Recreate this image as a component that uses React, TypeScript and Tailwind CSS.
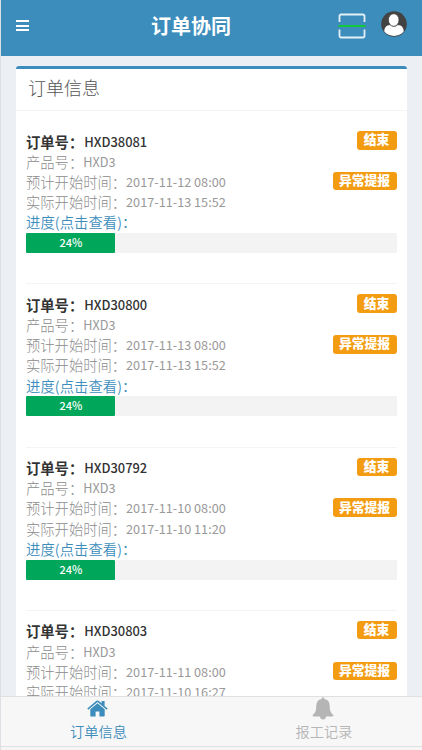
import { useState } from 'react';
import clsx from 'clsx';

interface Order {
  no: string;
  product: string;
  planned: string;
  actual: string;
  progress: number;
}

const ORDERS: Order[] = [
  { no: 'HXD38081', product: 'HXD3', planned: '2017-11-12 08:00', actual: '2017-11-13 15:52', progress: 24 },
  { no: 'HXD30800', product: 'HXD3', planned: '2017-11-13 08:00', actual: '2017-11-13 15:52', progress: 24 },
  { no: 'HXD30792', product: 'HXD3', planned: '2017-11-10 08:00', actual: '2017-11-10 11:20', progress: 24 },
  { no: 'HXD30803', product: 'HXD3', planned: '2017-11-11 08:00', actual: '2017-11-10 16:27', progress: 24 },
];

function ScanIcon() {
  return (
    <svg width="28" height="26" viewBox="0 0 28 26" fill="none">
      <path d="M1.500 9V3A1.500 1.500 0 0 1 3 1.500H25A1.500 1.500 0 0 1 26.500 3V9M1.500 16.500V23A1.500 1.500 0 0 0 3 24.500H25A1.500 1.500 0 0 0 26.500 23V16.500" stroke="#e4f1f8" strokeWidth="1.800" />
      <path d="M0.500 13H27.500" stroke="#12c83c" strokeWidth="2" />
    </svg>
  );
}

function UserIcon() {
  return (
    <svg width="26" height="26" viewBox="0 0 26 26">
      <circle cx="13" cy="13" r="12.800" fill="#434343" />
      <path d="M3.300 20.500C3.300 16.300 5.500 14.300 9 14Q13 17 17 14C20.500 14.300 22.700 16.300 22.700 20.500A12.800 12.800 0 0 1 3.300 20.500Z" fill="#fff" />
      <ellipse cx="12.700" cy="9" rx="5.300" ry="6.300" fill="#fff" stroke="#434343" strokeWidth="0.800" />
    </svg>
  );
}

function HomeIcon() {
  return (
    <svg width="21" height="17" viewBox="0 0 21 17" fill="currentColor">
      <path d="M10.500 3.300 3.300 9.300V15.800Q3.300 16.600 4.100 16.600H8.600V11.600H12.400V16.600H16.900Q17.700 16.600 17.700 15.800V9.300Z" />
      <path d="M0.300 8.500 9.400 0.800Q10.500 0 11.600 0.800L14.600 3.300V1H17.600V5.900L20.700 8.500 19.700 9.700 10.500 2.100 1.300 9.700Z" />
    </svg>
  );
}

function BellIcon() {
  return (
    <svg width="22" height="23" viewBox="0 0 22 23" fill="currentColor">
      <path d="M11 0.200Q12.400 0.200 12.400 1.900C16 2.600 17.700 5.200 17.700 8.500C17.700 14 19 16.300 21.500 18.100Q21.500 19.600 20 19.600H14C14 21.400 12.700 22.500 11 22.500S8 21.400 8 19.600H2Q0.500 19.600 0.500 18.100C3 16.300 4.300 14 4.300 8.500C4.300 5.200 6 2.600 9.600 1.900Q9.600 0.200 11 0.200Z" />
    </svg>
  );
}

function Field({ label, value }: { label: string; value: string }) {
  return (
    <div className="flex h-[20.200px] items-center whitespace-nowrap font-light text-[#8c8c8c]">
      <span>{label}：</span>
      <span className="text-[12.700px] font-normal text-[#999]">{value}</span>
    </div>
  );
}

function OrderItem({ order }: { order: Order }) {
  return (
    <li className="h-[163.300px] border-t border-[#f4f4f4] pt-[10.500px] text-[14.300px] leading-[20.200px] first:border-transparent">
      <div className="flex justify-between">
        <div>
          <div className="flex h-[20.200px] items-center whitespace-nowrap font-bold text-[#333]">
            <span>订单号：</span>
            <span className="pl-[1px] text-[12.900px] font-medium">{order.no}</span>
          </div>
          <Field label="产品号" value={order.product} />
          <Field label="预计开始时间" value={order.planned} />
          <Field label="实际开始时间" value={order.actual} />
        </div>
        <div className="-mt-[0.500px] flex flex-col items-end gap-[22.300px] text-[12.800px] font-black leading-[16px] text-white">
          <button className="h-[18.500px] w-[40px] rounded-[3px] bg-[#f39c12] pb-[2px]">结束</button>
          <button className="h-[18.500px] w-[64px] rounded-[3px] bg-[#f39c12] pb-[2px]">异常提报</button>
        </div>
      </div>
      <a href="#" className="block h-[20.700px] w-fit whitespace-nowrap font-[350] tracking-[0.100px] text-[#3c8dbc]">进度(点击查看)：</a>
      <div className="h-[20px] rounded-[1px] bg-[#f3f3f3]">
        <div
          className="h-full rounded-[1px] bg-[#00a65a] pl-[1px] text-center text-[11px] font-medium leading-[19px] text-white"
          style={{ width: `${order.progress}%` }}
        >
          {order.progress}%
        </div>
      </div>
    </li>
  );
}

export default function App() {
  const [tab, setTab] = useState<'orders' | 'records'>('orders');

  return (
    <div className="flex h-[750px] w-[422px] flex-col overflow-hidden border-l border-[#dcdfe4] bg-[#ecf0f5] font-['Noto_Sans_CJK_SC',sans-serif]">
      <header className="flex h-[56px] shrink-0 items-center bg-[#3c8dbc] px-[15px] text-white">
        <button className="mb-[5px] flex w-[13px] flex-col gap-[2.500px]">
          <span className="h-[2px] w-full bg-white" />
          <span className="h-[2px] w-full bg-white" />
          <span className="h-[2px] w-full bg-white" />
        </button>
        <h1 className="ml-[122px] pb-[4px] text-[20px] font-bold leading-[28px]">订单协同</h1>
        <div className="ml-auto flex items-center gap-[15px] pb-[8px]">
          <div className="pt-[4px]"><ScanIcon /></div>
          <UserIcon />
        </div>
      </header>

      <main className="min-h-0 flex-1 overflow-hidden px-[15px] pt-[10px]">
        <section className="rounded-[3px] border-t-[3px] border-[#3c8dbc] bg-white">
          <h2 className="h-[41.500px] border-b border-[#f4f4f4] pl-[12px] pt-[5px] text-[18px] font-light leading-[26px] text-[#555]">订单信息</h2>
          <ul className="pl-[10px] pr-[10.500px] pt-[9.500px]">
            {ORDERS.map((order) => (
              <OrderItem key={order.no} order={order} />
            ))}
          </ul>
        </section>
      </main>

      <nav className="grid h-[51px] shrink-0 grid-cols-[195px_226px] border-y border-[#e0e0e0] bg-[#f7f7f7] text-[14.200px] font-[350] leading-[20px]">
        <button
          onClick={() => setTab('orders')}
          className={clsx('flex flex-col items-center pt-[3px]', tab === 'orders' ? 'text-[#3c8dbc]' : 'text-[#b5b5b5]')}
        >
          <span className="mr-[3px] h-[21px]"><HomeIcon /></span>
          <span>订单信息</span>
        </button>
        <button
          onClick={() => setTab('records')}
          className={clsx('flex flex-col items-center pl-[30px]', tab === 'records' ? 'text-[#3c8dbc]' : 'text-[#b5b5b5]')}
        >
          <span className="mr-[3px] h-[24px]"><BellIcon /></span>
          <span>报工记录</span>
        </button>
      </nav>
      <div className="h-[3px] shrink-0 bg-[#f5f5f5]" />
    </div>
  );
}
